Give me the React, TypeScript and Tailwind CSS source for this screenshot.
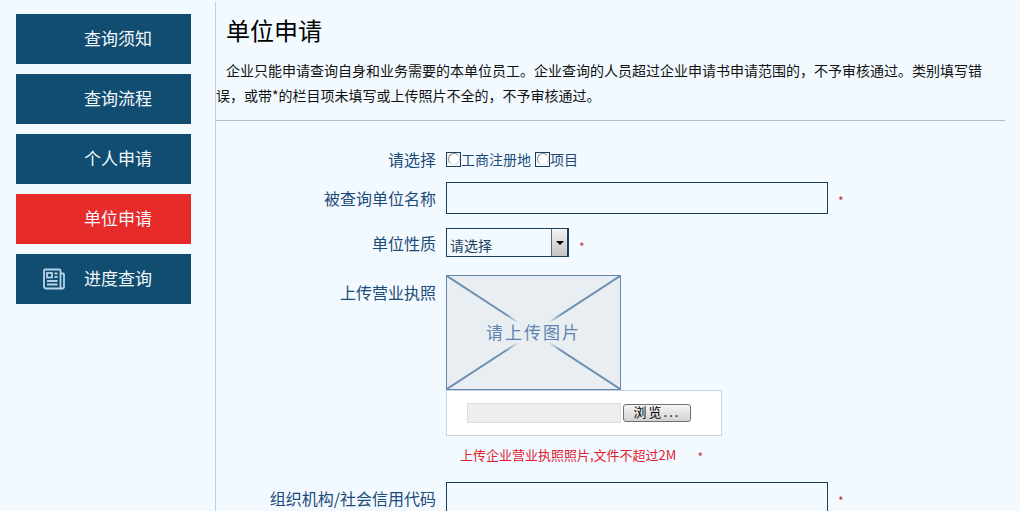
import React from 'react';

const fontStack = { fontFamily: '"Noto Sans CJK SC", "Liberation Sans", sans-serif' };

const navItems = ['查询须知', '查询流程', '个人申请', '单位申请', '进度查询'];

const NewsIcon = () => (
  <svg width="24" height="24" viewBox="0 0 24 24" fill="none" stroke="#b5d3e6" strokeWidth="1.8">
    <path d="M3 2.5h14.5a1 1 0 0 1 1 1V21.5H4a2 2 0 0 1-2-2V3.5a1 1 0 0 1 1-1z" />
    <path d="M18.5 6.5h2.5a1 1 0 0 1 1 1v12a2 2 0 0 1-2 2h-1.5" />
    <rect x="5" y="6" width="5" height="4.5" />
    <path d="M12.5 6.5h3M12.5 10h3M5 14h10.5M5 17.5h10.5" />
  </svg>
);

const Sidebar = () => (
  <aside className="w-[216px] shrink-0 border-r border-[#c3ced8] pl-4 pt-3 flex flex-col gap-[10px]">
    {navItems.map((item, i) => (
      <div
        key={item}
        className={`relative w-[175px] h-[50px] flex items-center pl-[68px] pb-[2px] text-[17px] text-[#f4f9fc] ${i === 3 ? 'bg-[#e72a2a]' : 'bg-[#114d70]'}`}
      >
        {i === 4 && (
          <span className="absolute left-[26px] top-[13px]">
            <NewsIcon />
          </span>
        )}
        {item}
      </div>
    ))}
  </aside>
);

const Radio = () => (
  <span className="w-[15px] h-[15px] border border-[#1d3f5c] bg-[#f2faff] flex items-center justify-center">
    <span className="w-[12px] h-[12px] rounded-full border border-[#8a8f94] border-r-[#d6dade] border-b-[#e6e9eb] bg-white" />
  </span>
);

const Row = ({ label, className, labelClass, children }: { label: string; className?: string; labelClass?: string; children: React.ReactNode }) => (
  <div className={`flex ${className ?? ''}`}>
    <div className={`w-[220px] shrink-0 text-right text-[16px] leading-[24px] text-[#1d4a7b] ${labelClass ?? ''}`}>{label}</div>
    <div className="ml-[10px] flex-1 flex">{children}</div>
  </div>
);

const Star = ({ className }: { className?: string }) => (
  <span className={`text-[12px] text-[#c0333f] ${className ?? ''}`}>*</span>
);

export default function App() {
  return (
    <div className="h-[511px] w-[1020px] overflow-hidden bg-[#f2faff] flex pt-[2px]" style={fontStack}>
      <Sidebar />
      <main className="w-[789px] shrink-0">
        <div className="border-b border-[#b5bcc2] h-[119px]">
          <h1 className="pl-[10px] pt-[11px] text-[24px] leading-[34px] font-normal text-black">单位申请</h1>
          <p className="mt-[11px] text-[14px] leading-[25px] text-[#111] indent-[10px]">
            企业只能申请查询自身和业务需要的本单位员工。企业查询的人员超过企业申请书申请范围的，不予审核通过。类别填写错误，或带*的栏目项未填写或上传照片不全的，不予审核通过。
          </p>
        </div>

        <Row label="请选择" className="mt-[27px] h-[24px]" labelClass="-mt-[1px]">
          <div className="flex items-center text-[14px] text-[#1d4a7b] -mt-[2px]">
            <Radio />
            <span>工商注册地</span>
            <span className="w-[4px]" />
            <Radio />
            <span>项目</span>
          </div>
        </Row>

        <Row label="被查询单位名称" className="mt-[10px] items-center">
          <div className="w-[382px] h-[32px] border border-[#17405f] bg-[#f2faff]" />
          <Star className="ml-[10px] mt-[10px]" />
        </Row>

        <Row label="单位性质" className="mt-[14px] items-center">
          <div className="w-[123px] h-[29px] border border-[#17405f] border-r-2 flex items-stretch">
            <span className="flex-1 pl-[3px] pt-[4px] text-[14px] leading-[24px] text-[#1d3f5c]">请选择</span>
            <span className="w-[16px] border-l border-[#5c6a75] bg-gradient-to-b from-[#f4f4f4] to-[#c4c4c4] flex items-center justify-center">
              <span className="w-0 h-0 border-x-[4px] border-x-transparent border-t-[4px] border-t-black" />
            </span>
          </div>
          <Star className="ml-[10px] mt-[10px]" />
        </Row>

        <Row label="上传营业执照" className="mt-[18px] items-start" labelClass="mt-[5px]">
          <div className="flex flex-col">
            <div className="relative w-[175px] h-[115px] border border-[#6488ad] bg-[#e8eef2] flex items-center justify-center text-[17px] tracking-[2px] text-[#5f83b0]">
              <svg className="absolute inset-0 w-full h-full" viewBox="0 0 175 115" preserveAspectRatio="none">
                <defs>
                  <radialGradient id="fade">
                    <stop offset="0.55" stopColor="#e8eef2" />
                    <stop offset="1" stopColor="#e8eef2" stopOpacity="0" />
                  </radialGradient>
                </defs>
                <path d="M0 0L175 115M175 0L0 115" stroke="#6f8fb0" strokeWidth="2" fill="none" />
                <ellipse cx="87.5" cy="57.5" rx="40" ry="26" fill="url(#fade)" />
              </svg>
              <span className="relative leading-[24px] -mt-[2px]">请上传图片</span>
            </div>
            <div className="w-[276px] h-[46px] bg-white border border-[#c7d3de] flex items-center pl-[20px]">
              <span className="w-[154px] h-[20px] bg-[#eeeeee] border border-[#dddddd]" />
              <span className="ml-[2px] w-[68px] h-[18px] rounded-[3px] border border-[#707070] bg-gradient-to-b from-[#f6f6f6] to-[#d2d2d2] flex items-center justify-center pb-[3px] text-[13px] leading-none tracking-[2px] text-black">
                浏览...
              </span>
            </div>
            <div className="mt-[9px] pl-[14px] h-[20px] flex items-center text-[13px] text-[#e02030]">
              <span>上传企业营业执照照片,文件不超过2M</span>
              <Star className="ml-[21px] mt-[3px]" />
            </div>
          </div>
        </Row>

        <Row label="组织机构/社会信用代码" className="mt-[17px] items-center">
          <div className="w-[382px] h-[32px] border border-[#17405f]" />
          <Star className="ml-[10px] mt-[10px]" />
        </Row>
      </main>
    </div>
  );
}
